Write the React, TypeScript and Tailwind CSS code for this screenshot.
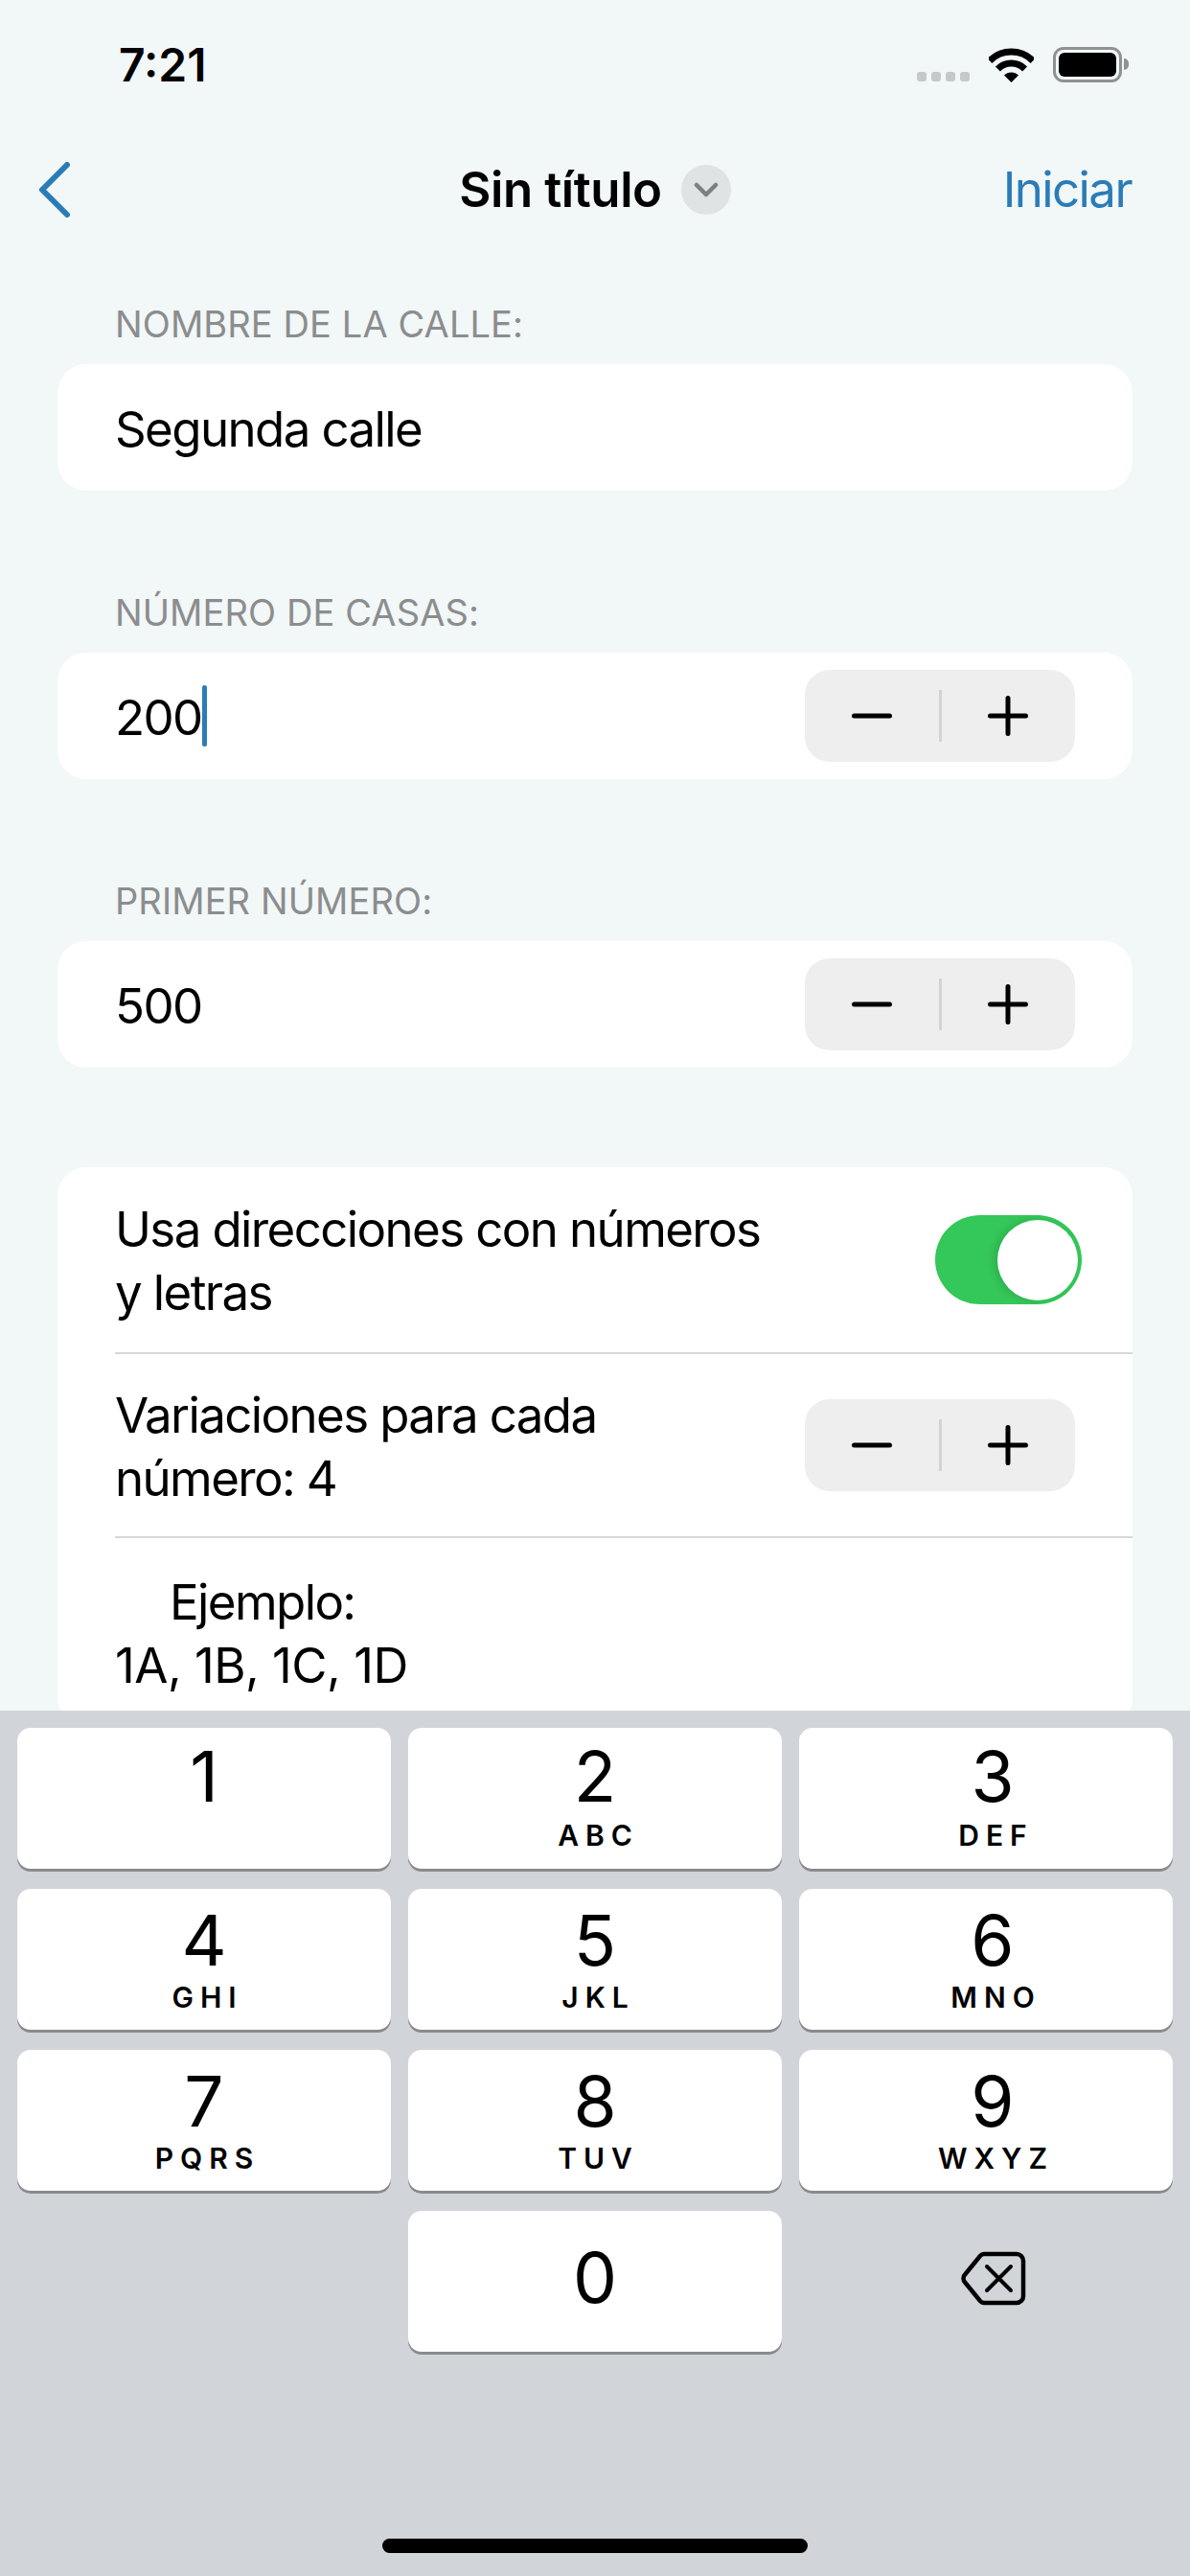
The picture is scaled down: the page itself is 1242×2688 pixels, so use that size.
const Stepper = () => (
  <div className="flex h-[96px] w-[282px] shrink-0 items-center rounded-[26px] bg-[#eeeeef]">
    <div className="flex flex-1 items-center justify-center">
      <svg width="42" height="6" viewBox="0 0 42 6">
        <path d="M2.5 3H39.5" stroke="#000" strokeWidth="5" strokeLinecap="round" />
      </svg>
    </div>
    <div className="h-[54px] w-[3px] bg-[#d3d3d5]" />
    <div className="flex flex-1 items-center justify-center">
      <svg width="42" height="42" viewBox="0 0 42 42">
        <path d="M2.5 21H39.5M21 2.5V39.5" stroke="#000" strokeWidth="5" strokeLinecap="round" />
      </svg>
    </div>
  </div>
);

const Field = ({ label, value, cursor }: { label: string; value: string; cursor?: boolean }) => (
  <div className="mb-[104px]">
    <p className="mb-[19px] pl-[60px] text-[38px] leading-[46px] tracking-[0.1px] text-[#8b8d8e]">{label}</p>
    <div className="flex h-[132px] items-center justify-between rounded-[30px] bg-white pl-[60px] pr-[60px]">
      <div className="flex items-center">
        <span className="pt-[3px]">{value}</span>
        {cursor && <div className="h-[64px] w-[5px] rounded-full bg-[#2a7cb8]" />}
      </div>
      {value !== "Segunda calle" && <Stepper />}
    </div>
  </div>
);

const keys = [
  { digit: "1", letters: "", inset: "pt-[12px]", gap: "mt-[7px]" },
  { digit: "2", letters: "ABC", inset: "pt-[12px]", gap: "mt-[7px]" },
  { digit: "3", letters: "DEF", inset: "pl-[14px] pt-[12px]", gap: "mt-[7px]" },
  { digit: "4", letters: "GHI", inset: "pt-[15px]", gap: "mt-[5px]" },
  { digit: "5", letters: "JKL", inset: "pt-[15px]", gap: "mt-[5px]" },
  { digit: "6", letters: "MNO", inset: "pl-[14px] pt-[15px]", gap: "mt-[5px]" },
  { digit: "7", letters: "PQRS", inset: "pt-[15px]", gap: "mt-[5px]" },
  { digit: "8", letters: "TUV", inset: "pt-[15px]", gap: "mt-[5px]" },
  { digit: "9", letters: "WXYZ", inset: "pl-[14px] pt-[15px]", gap: "mt-[5px]" },
];

const App = () => {
  return (
    <div className="flex h-[2688px] w-[1242px] flex-col overflow-hidden bg-[#f2f7f7] font-['Inter',sans-serif] text-[51px] leading-[66px] tracking-[-1.6px] text-black">
      {/* status bar */}
      <div className="flex h-[134px] shrink-0 items-center justify-between pl-[124px] pr-[64px]">
        <span className="mt-[2px] text-[48px] font-semibold leading-none tracking-normal">7:21</span>
        <div className="flex items-end">
          <div className="mb-[1px] mr-[20px] flex gap-[5px]">
            <div className="h-[10px] w-[10px] rounded-[3px] bg-[#c6c9ca]" />
            <div className="h-[10px] w-[10px] rounded-[3px] bg-[#c6c9ca]" />
            <div className="h-[10px] w-[10px] rounded-[3px] bg-[#c6c9ca]" />
            <div className="h-[10px] w-[10px] rounded-[3px] bg-[#c6c9ca]" />
          </div>
          <svg width="47" height="36" viewBox="0 0 47 36" className="mr-[20px]">
            <path d="M0.9 13.4A32 32 0 0 1 46.1 13.4" fill="none" stroke="#000" strokeWidth="7" />
            <path d="M9.4 21.9A20 20 0 0 1 37.6 21.9" fill="none" stroke="#000" strokeWidth="7" />
            <path d="M23.5 36L16 28.5A10.6 10.6 0 0 1 31 28.5Z" fill="#000" />
          </svg>
          <div className="flex items-center">
            <div className="flex h-[37px] w-[72px] items-center justify-center rounded-[11px] border-[3px] border-[#8f9192]">
              <div className="h-[25px] w-[60px] rounded-[6px] bg-black" />
            </div>
            <div className="ml-[2px] h-[12px] w-[5px] rounded-r-full bg-[#8f9192]" />
          </div>
        </div>
      </div>

      {/* nav bar */}
      <div className="flex h-[128px] shrink-0 items-center px-[61px]">
        <div className="flex-1">
          <svg width="34" height="58" viewBox="0 0 34 58" className="-ml-[21px] block">
            <path d="M30 3L4 29L30 55" fill="none" stroke="#2a7cb8" strokeWidth="6" strokeLinecap="round" strokeLinejoin="round" />
          </svg>
        </div>
        <div className="flex items-center">
          <span className="font-semibold tracking-[-0.4px]">Sin título</span>
          <div className="ml-[20px] flex h-[52px] w-[52px] items-center justify-center rounded-full bg-[#dfe3e3]">
            <svg width="26" height="16" viewBox="0 0 26 16">
              <path d="M3 3L13 13L23 3" fill="none" stroke="#7d7f80" strokeWidth="4.5" strokeLinecap="round" strokeLinejoin="round" />
            </svg>
          </div>
        </div>
        <div className="flex flex-1 justify-end">
          <span className="text-[#2a7cb8]">Iniciar</span>
        </div>
      </div>

      {/* form */}
      <div className="min-h-0 flex-1 px-[60px] pt-[53px]">
        <Field label="NOMBRE DE LA CALLE:" value="Segunda calle" />
        <Field label="NÚMERO DE CASAS:" value="200" cursor />
        <Field label="PRIMER NÚMERO:" value="500" />
        <div className="mt-[2px] rounded-[30px] bg-white pl-[60px]">
          <div className="flex h-[193px] items-center justify-between pr-[53px]">
            <p className="pt-[3px]">
              Usa direcciones con números
              <br />y letras
            </p>
            <div className="flex h-[93px] w-[153px] items-center justify-end rounded-full bg-[#34c759] pr-[4px]">
              <div className="h-[84px] w-[84px] rounded-full bg-white shadow-[-4px_0_8px_rgba(0,0,0,0.12)]" />
            </div>
          </div>
          <div className="h-[2px] bg-[#d6d8d8]" />
          <div className="flex h-[190px] items-center justify-between pr-[60px]">
            <p className="pt-[3px]">
              Variaciones para cada
              <br />
              número: 4
            </p>
            <Stepper />
          </div>
          <div className="h-[2px] bg-[#d6d8d8]" />
          <div className="flex h-[197px] items-center">
            <p className="pt-[3px]">
              <span className="pl-[57px]">Ejemplo:</span>
              <br />
              <span className="tracking-[-0.5px]">1A, 1B, 1C, 1D</span>
            </p>
          </div>
        </div>
      </div>

      {/* keyboard */}
      <div className="flex h-[903px] shrink-0 flex-col bg-[#d1d4d9] px-[18px] pt-[18px] tracking-normal">
        <div className="grid grid-cols-3 gap-x-[18px] gap-y-[21px]">
          {keys.map(({ digit, letters, inset, gap }) => (
            <div
              key={digit}
              className={`flex h-[147px] flex-col items-center rounded-[14px] bg-white shadow-[0_3px_0_#898a8d] ${inset}`}
            >
              <span className="text-[73px] leading-[78px]">{digit}</span>
              <span className={`pl-[7px] text-[30px] font-semibold leading-[30px] tracking-[7px] ${gap}`}>{letters}</span>
            </div>
          ))}
          <div />
          <div className="flex h-[147px] justify-center rounded-[14px] bg-white pt-[31px] shadow-[0_3px_0_#898a8d]">
            <span className="text-[73px] leading-[78px]">0</span>
          </div>
          <div className="flex h-[147px] items-start justify-center pl-[16px] pt-[42px]">
            <svg width="68" height="57" viewBox="0 0 68 57">
              <path
                d="M24 3H58a7 7 0 0 1 7 7V47a7 7 0 0 1 -7 7H24a6 6 0 0 1 -4 -2L4.5 33a6 6 0 0 1 0 -9L20 5a6 6 0 0 1 4 -2Z"
                fill="none"
                stroke="#000"
                strokeWidth="4.5"
                strokeLinejoin="round"
              />
              <path d="M27 16L52 41M52 16L27 41" stroke="#000" strokeWidth="4" strokeLinecap="round" />
            </svg>
          </div>
        </div>
        <div className="mb-[24px] mt-auto h-[15px] w-[444px] self-center rounded-full bg-black" />
      </div>
    </div>
  );
};

export default App;
